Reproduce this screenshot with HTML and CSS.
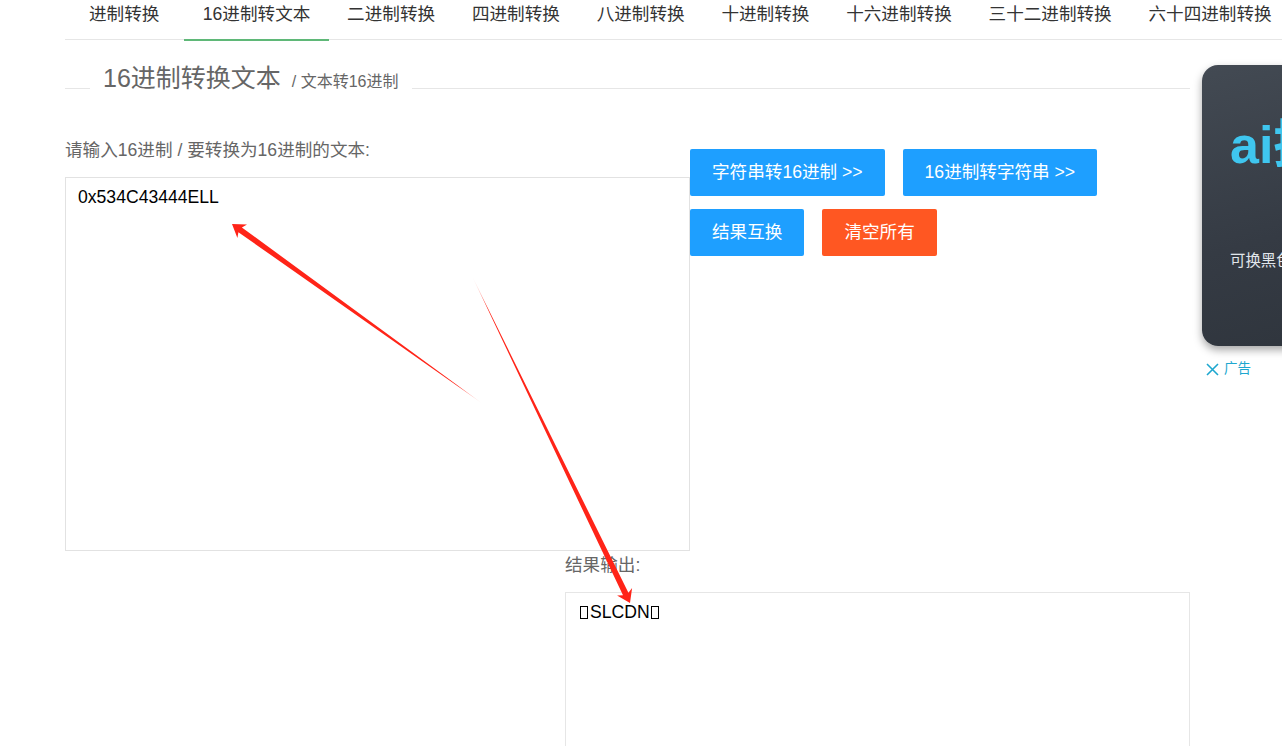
FILE: index.html
```html
<!DOCTYPE html>
<html lang="zh-CN">
<head>
<meta charset="utf-8">
<title>16进制转文本</title>
<link rel="stylesheet" href="styles.css">
</head>
<body>
<div class="nav">
  <ul class="tabs">
    <li class="tab first">进制转换</li>
    <li class="tab active">16进制转文本</li>
    <li class="tab">二进制转换</li>
    <li class="tab">四进制转换</li>
    <li class="tab">八进制转换</li>
    <li class="tab">十进制转换</li>
    <li class="tab">十六进制转换</li>
    <li class="tab">三十二进制转换</li>
    <li class="tab">六十四进制转换</li>
  </ul>
</div>
<div class="page">
  <div class="field-title">
    <span class="line-left"></span>
    <span class="legend"><span class="legend-main">16进制转换文本</span><span class="legend-sub">/ 文本转16进制</span></span>
    <span class="line-right"></span>
  </div>
  <div class="main">
    <div class="input-col">
      <div class="label">请输入16进制 / 要转换为16进制的文本:</div>
      <textarea class="input-box" readonly>0x534C43444ELL</textarea>
    </div>
    <div class="btns">
      <div class="btn-row">
        <button class="btn">字符串转16进制 &gt;&gt;</button>
        <button class="btn">16进制转字符串 &gt;&gt;</button>
      </div>
      <div class="btn-row">
        <button class="btn">结果互换</button>
        <button class="btn btn-danger">清空所有</button>
      </div>
    </div>
  </div>
  <div class="output">
    <div class="label">结果输出:</div>
    <div class="output-box"><span class="tofu"></span>SLCDN<span class="tofu"></span></div>
  </div>
</div>
<aside class="ad">
  <div class="ad-card">
    <div class="ad-title">ai换脸</div>
    <div class="ad-text">可换黑色背景</div>
  </div>
  <div class="ad-close"><svg class="ad-x" width="13" height="13" viewBox="0 0 13 13"><path d="M1 1 L12 12 M12 1 L1 12" stroke="#1ea7cf" stroke-width="1.6" fill="none"/></svg><span>广告</span></div>
</aside>
<svg class="annot" width="1282" height="746" viewBox="0 0 1282 746" xmlns="http://www.w3.org/2000/svg">
  <defs>
    <linearGradient id="g1" gradientUnits="userSpaceOnUse" x1="483" y1="404" x2="232" y2="224">
      <stop offset="0" stop-color="#ff2418" stop-opacity="0"/>
      <stop offset="0.1" stop-color="#ff2418" stop-opacity="1"/>
      <stop offset="1" stop-color="#ff2418" stop-opacity="1"/>
    </linearGradient>
    <linearGradient id="g2" gradientUnits="userSpaceOnUse" x1="472" y1="276" x2="630" y2="603">
      <stop offset="0" stop-color="#ff2418" stop-opacity="0"/>
      <stop offset="0.1" stop-color="#ff2418" stop-opacity="1"/>
      <stop offset="1" stop-color="#ff2418" stop-opacity="1"/>
    </linearGradient>
  </defs>
  <polygon fill="url(#g1)" points="483,404 241.9,227.4 247,224.6 232,224 237.4,238 238.4,232.2"/>
  <polygon fill="url(#g2)" points="472,276 628.4,592.7 632.1,588.1 630,603 617.1,595.4 623,595.3"/>
</svg>
</body>
</html>
```
FILE: styles.css
```css
html, body {
  margin: 0;
  padding: 0;
  background: #fff;
  font-family: "Liberation Sans", "Noto Sans CJK SC", sans-serif;
  color: #333;
  overflow: hidden;
}

.nav {
  margin-left: 65px;
  overflow: hidden;
  height: 42px;
  margin-bottom: -2px;
}

.tabs {
  list-style: none;
  margin: 0;
  padding: 0;
  display: flex;
  white-space: nowrap;
  border-bottom: 1px solid #e6e6e6;
  height: 39px;
}

.tab {
  position: relative;
  flex: none;
  padding: 0 18.4px;
  height: 39px;
  line-height: 28px;
  font-size: 17.6px;
  color: #333;
}

.tab.first {
  padding-left: 24px;
  padding-right: 25px;
}

.tab.active::after {
  content: "";
  position: absolute;
  z-index: 2;
  left: 0;
  right: 0;
  top: 39px;
  height: 2px;
  background: #5fb878;
}

.page {
  margin-left: 65px;
  width: 1125px;
}

.field-title {
  display: flex;
  align-items: flex-end;
  height: 49px;
}

.line-left {
  width: 25px;
  border-bottom: 1px solid #e6e6e6;
}

.line-right {
  flex: 1;
  border-bottom: 1px solid #e6e6e6;
}

.legend {
  display: flex;
  align-items: baseline;
  padding: 0 13px;
  line-height: 1;
  margin-bottom: -2px;
  color: #666;
}

.legend-main {
  font-size: 25px;
}

.legend-sub {
  font-size: 16px;
  margin-left: 11px;
}

.main {
  display: flex;
  margin-top: 49px;
}

.label {
  font-size: 17.6px;
  line-height: 24px;
  color: #666;
}

.input-col {
  width: 625px;
  flex: none;
}

.input-box {
  display: block;
  box-sizing: border-box;
  width: 625px;
  height: 374px;
  margin: 15px 0 0;
  padding: 7px 12px;
  border: 1px solid #e2e2e2;
  border-radius: 0;
  font-family: "Liberation Sans", "Noto Sans CJK SC", sans-serif;
  font-size: 17.6px;
  line-height: 24px;
  color: #000;
  resize: none;
  outline: none;
  background: #fff;
}

.btns {
  display: flex;
  flex-direction: column;
  gap: 13px;
  margin-top: 11px;
}

.btn-row {
  display: flex;
  gap: 18px;
}

.btn {
  height: 47px;
  padding: 0 22px;
  border: none;
  border-radius: 2px;
  background: #1e9fff;
  color: #fff;
  font-family: "Liberation Sans", "Noto Sans CJK SC", sans-serif;
  font-size: 17.6px;
  line-height: 47px;
  white-space: nowrap;
  cursor: pointer;
}

.btn-danger {
  background: #ff5722;
}

.output {
  margin-left: 500px;
  width: 625px;
  padding-top: 2px;
}

.output-box {
  box-sizing: border-box;
  margin-top: 15px;
  height: 220px;
  padding: 7px 13px;
  border: 1px solid #e6e6e6;
  font-size: 17.6px;
  line-height: 24px;
  color: #000;
}

.tofu {
  display: inline-block;
  box-sizing: border-box;
  width: 8px;
  height: 13px;
  border: 1px solid #000;
  margin: 0 2px 0 1px;
  vertical-align: -1px;
}

.ad {
  position: absolute;
  left: 1202px;
  top: 65px;
  width: 140px;
}

.ad-card {
  box-sizing: border-box;
  height: 281px;
  border-radius: 16px;
  background: linear-gradient(165deg, #434a53 0%, #353b44 60%, #2f353d 100%);
  box-shadow: 0 4px 8px rgba(0, 0, 0, 0.35);
  padding: 50px 0 0 28px;
  overflow: hidden;
  white-space: nowrap;
}

.ad-title {
  font-size: 52px;
  line-height: 60px;
  font-weight: bold;
  color: #3fc6ef;
}

.ad-text {
  margin-top: 76px;
  font-size: 15.4px;
  line-height: 20px;
  color: #e1e6eb;
}

.ad-close {
  display: flex;
  align-items: center;
  gap: 5px;
  margin-top: 14px;
  margin-left: 4px;
  font-size: 13.5px;
  line-height: 18px;
  color: #1ea7cf;
}

.ad-x {
  display: block;
}

.annot {
  position: absolute;
  left: 0;
  top: 0;
  pointer-events: none;
}
```
